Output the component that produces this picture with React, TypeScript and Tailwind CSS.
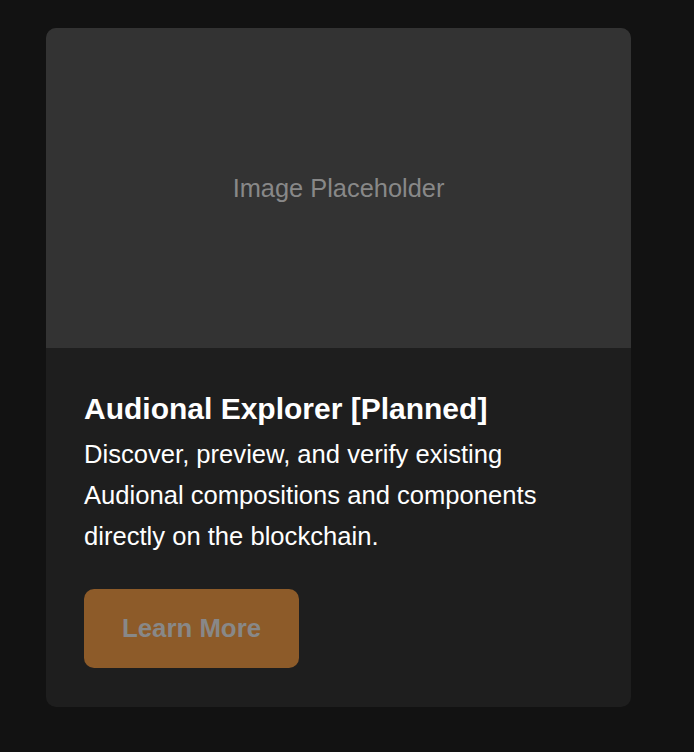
import React from "react";

const App = () => {
  return (
    <div
      className="min-h-screen w-full bg-[#121212] pt-[28px] pl-[46px]"
      style={{ fontFamily: '"Liberation Sans", Arial, sans-serif' }}
    >
      <div className="w-[585px] overflow-hidden rounded-[10px] bg-[#1e1e1e]">
        {/* Image */}
        <div className="flex h-[320px] items-center justify-center bg-[#333333]">
          <span className="text-[25.4px] text-[#888888]">Image Placeholder</span>
        </div>

        {/* Body */}
        <div className="px-[38px] pt-[43px] pb-[39px]">
          <h3 className="text-[30px] font-bold leading-[35px] text-white">
            Audional Explorer [Planned]
          </h3>
          <p className="mt-[8px] text-[25.6px] leading-[41px] text-white">
            Discover, preview, and verify existing Audional compositions and
            components directly on the blockchain.
          </p>
          <button
            type="button"
            className="mt-[32px] flex h-[79px] w-[215px] items-center justify-center rounded-[10px] bg-[#8d5b29] text-[25.8px] font-bold text-[#888888]"
          >
            Learn More
          </button>
        </div>
      </div>
    </div>
  );
};

export default App;
